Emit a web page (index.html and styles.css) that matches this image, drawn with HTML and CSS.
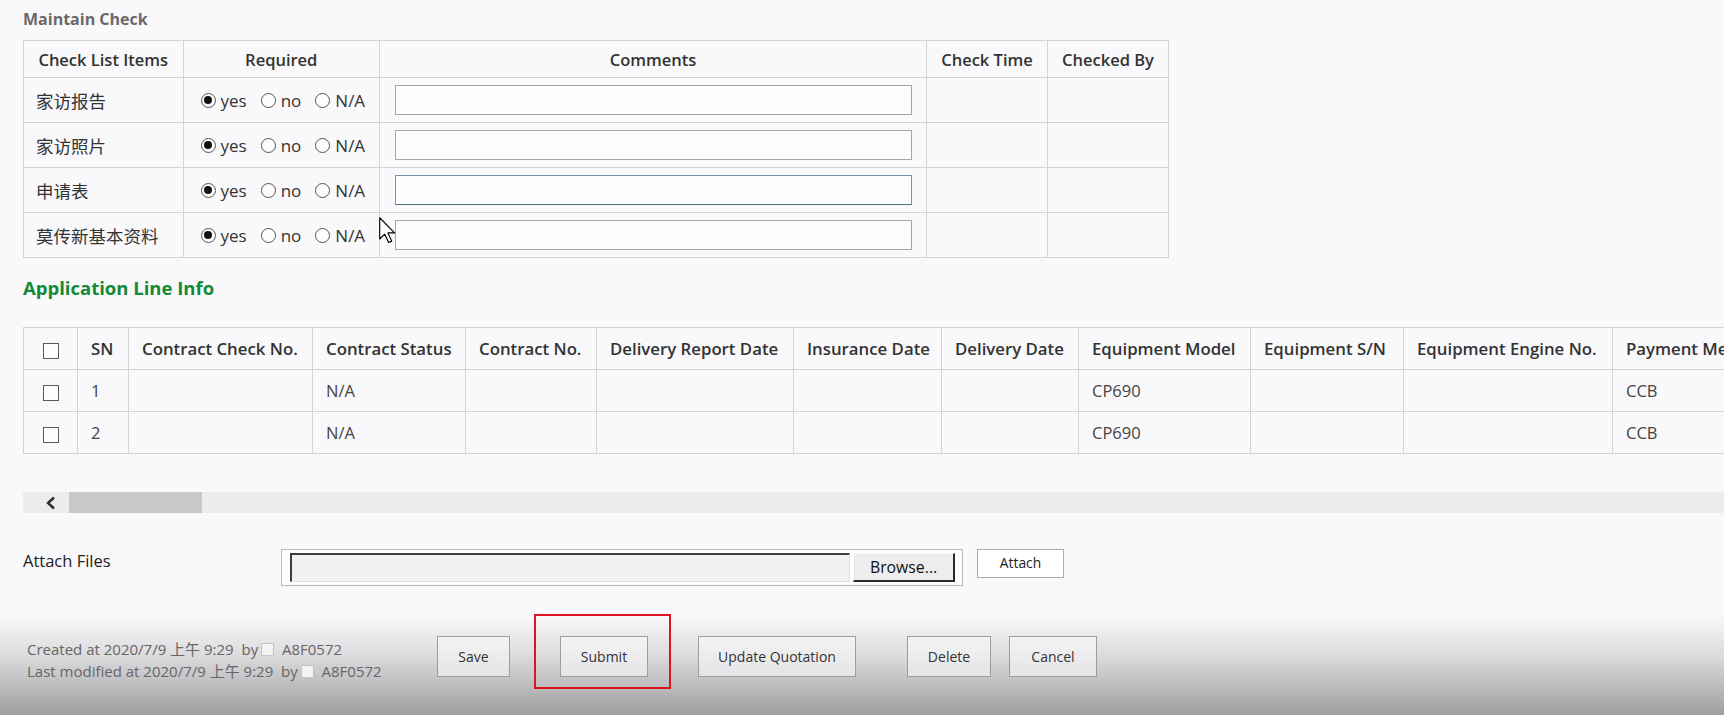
FILE: index.html
```html
<!DOCTYPE html>
<html lang="en">
<head>
<meta charset="utf-8">
<title>Maintain Check</title>
<link rel="stylesheet" href="styles.css">
</head>
<body>
<div class="page">
  <div class="content">
    <h2 class="section-title">Maintain Check</h2>
    <table class="check">
      <colgroup>
        <col class="c-item"><col class="c-req"><col class="c-com"><col class="c-time"><col class="c-by">
      </colgroup>
      <thead>
        <tr><th>Check List Items</th><th>Required</th><th>Comments</th><th>Check Time</th><th>Checked By</th></tr>
      </thead>
      <tbody>
        <tr>
          <td class="item">家访报告</td>
          <td><div class="radios"><span class="radio on"></span><span class="rl">yes</span><span class="radio"></span><span class="rl">no</span><span class="radio"></span><span class="rl">N/A</span></div></td>
          <td class="com"><div class="input"></div></td><td></td><td></td>
        </tr>
        <tr>
          <td class="item">家访照片</td>
          <td><div class="radios"><span class="radio on"></span><span class="rl">yes</span><span class="radio"></span><span class="rl">no</span><span class="radio"></span><span class="rl">N/A</span></div></td>
          <td class="com"><div class="input"></div></td><td></td><td></td>
        </tr>
        <tr>
          <td class="item">申请表</td>
          <td><div class="radios"><span class="radio on"></span><span class="rl">yes</span><span class="radio"></span><span class="rl">no</span><span class="radio"></span><span class="rl">N/A</span></div></td>
          <td class="com"><div class="input focus"></div></td><td></td><td></td>
        </tr>
        <tr>
          <td class="item">莫传新基本资料</td>
          <td><div class="radios"><span class="radio on"></span><span class="rl">yes</span><span class="radio"></span><span class="rl">no</span><span class="radio"></span><span class="rl">N/A</span></div></td>
          <td class="com"><div class="input"></div></td><td></td><td></td>
        </tr>
      </tbody>
    </table>

    <h2 class="green-title">Application Line Info</h2>
  </div>

  <div class="lines-wrap">
    <table class="lines">
      <colgroup>
        <col class="l-cb"><col class="l-sn"><col class="l-ccn"><col class="l-cs"><col class="l-cn"><col class="l-drd"><col class="l-id"><col class="l-dd"><col class="l-em"><col class="l-es"><col class="l-ee"><col class="l-pm">
      </colgroup>
      <thead>
        <tr>
          <th class="cb"><span class="box"></span></th><th>SN</th><th>Contract Check No.</th><th>Contract Status</th><th>Contract No.</th><th>Delivery Report Date</th><th>Insurance Date</th><th>Delivery Date</th><th>Equipment Model</th><th>Equipment S/N</th><th>Equipment Engine No.</th><th>Payment Method</th>
        </tr>
      </thead>
      <tbody>
        <tr>
          <td class="cb"><span class="box"></span></td><td>1</td><td></td><td>N/A</td><td></td><td></td><td></td><td></td><td>CP690</td><td></td><td></td><td>CCB</td>
        </tr>
        <tr>
          <td class="cb"><span class="box"></span></td><td>2</td><td></td><td>N/A</td><td></td><td></td><td></td><td></td><td>CP690</td><td></td><td></td><td>CCB</td>
        </tr>
      </tbody>
    </table>
  </div>

  <div class="hscroll">
    <svg class="arrow" width="12" height="14" viewBox="0 0 12 14"><polyline points="9,1.5 3,7 9,12.5" fill="none" stroke="#2a2a2a" stroke-width="2.4"/></svg>
    <span class="thumb"></span>
  </div>

  <div class="attach-row">
    <span class="attach-label">Attach Files</span>
    <div class="file-box">
      <div class="file-field"></div>
      <div class="browse">Browse...</div>
    </div>
    <div class="attach-btn">Attach</div>
  </div>

  <div class="footer">
    <div class="meta">
      <div>Created at 2020/7/9 上午 9:29&nbsp; by<span class="ph"></span>&nbsp; A8F0572</div>
      <div>Last modified at 2020/7/9 上午 9:29&nbsp; by<span class="ph"></span>&nbsp; A8F0572</div>
    </div>
    <div class="actions">
      <button class="btn save">Save</button>
      <button class="btn submit">Submit</button>
      <button class="btn update">Update Quotation</button>
      <button class="btn delete">Delete</button>
      <button class="btn cancel">Cancel</button>
    </div>
    <div class="highlight"></div>
  </div>

  <svg class="cursor" width="17" height="27" viewBox="0 0 12 19">
    <path d="M0.5 0.5 L0.5 15.5 L4 12 L6.8 18 L9 17 L6.3 11.2 L11 11.2 Z" fill="#fff" stroke="#000" stroke-width="0.8" stroke-linejoin="round"/>
  </svg>
</div>
</body>
</html>
```

FILE: styles.css
```css
* { box-sizing: border-box; }
html, body { margin: 0; padding: 0; }
body {
  background: #f9f8fa;
  font-family: "Open Sans", "Noto Sans CJK SC", sans-serif;
  color: #333;
  width: 1724px;
  height: 715px;
  overflow: hidden;
}
.page { position: relative; height: 715px; }
.content { padding-left: 23px; padding-top: 8px; }

.section-title {
  margin: 0 0 10px 0;
  font-size: 16px;
  font-weight: 700;
  color: #6a6a6a;
  line-height: 22px;
}

/* check table */
.check {
  border-collapse: collapse;
  table-layout: fixed;
  width: 1145px;
  font-size: 16.5px;
}
.check .c-item { width: 159.5px; }
.check .c-req { width: 196.5px; }
.check .c-com { width: 547px; }
.check .c-time { width: 121px; }
.check .c-by { width: 121px; }
.check th, .check td {
  border: 1px solid #d3d3d5;
  padding: 0;
}
.check th {
  height: 37px;
  font-weight: 600;
  text-align: center;
  color: #333;
  white-space: nowrap;
}
.check td { height: 45px; }
.check td.item {
  padding-left: 12px;
  font-family: "Noto Sans CJK SC", sans-serif;
  font-size: 17.5px;
  color: #333;
  white-space: nowrap;
}
.radios {
  display: flex;
  align-items: center;
  padding-left: 17px;
  font-size: 17px;
  color: #333;
}
.radio {
  width: 15px;
  height: 15px;
  border: 1px solid #555;
  border-radius: 50%;
  display: inline-flex;
  align-items: center;
  justify-content: center;
  margin-right: 5px;
  background: #fdfdfd;
  flex: none;
}
.radio.on::after {
  content: "";
  width: 8px;
  height: 8px;
  border-radius: 50%;
  background: #111;
}
.rl { margin-right: 14px; }
.check td.com { padding: 0 14px 0 15px; }
.input {
  height: 30px;
  border: 1px solid #a6a6a8;
  background: #fcfbfd;
}
.input.focus {
  border-color: #6e9aa8;
  border-bottom-color: #4f6f7a;
}

.green-title {
  margin: 18px 0 0 0;
  font-size: 18.5px;
  font-weight: 700;
  color: #138a36;
  line-height: 24px;
}

/* lines table */
.lines-wrap {
  margin: 27px 0 0 23px;
  overflow: hidden;
  width: 1701px;
}
.lines {
  border-collapse: collapse;
  table-layout: fixed;
  width: 1800px;
  font-size: 16.8px;
}
.l-cb { width: 54px; }
.l-sn { width: 51px; }
.l-ccn { width: 184px; }
.l-cs { width: 153px; }
.l-cn { width: 131px; }
.l-drd { width: 197px; }
.l-id { width: 148px; }
.l-dd { width: 137px; }
.l-em { width: 172px; }
.l-es { width: 153px; }
.l-ee { width: 209px; }
.l-pm { width: 211px; }
.lines th, .lines td {
  border: 1px solid #d3d3d5;
  padding: 0 0 0 13px;
  text-align: left;
  white-space: nowrap;
  overflow: hidden;
}
.lines th {
  height: 42px;
  font-weight: 600;
  color: #333;
}
.lines td {
  height: 42px;
  color: #444;
  font-size: 16.5px;
}
.lines .cb { padding: 0; text-align: center; }
.box {
  display: inline-block;
  width: 16px;
  height: 16px;
  border: 1.5px solid #5a5a5a;
  background: #fdfdfd;
  vertical-align: middle;
}

/* horizontal scrollbar */
.hscroll {
  margin: 38px 0 0 23px;
  height: 21px;
  background: #ececee;
  display: flex;
  align-items: center;
}
.hscroll .arrow {
  margin-left: 22px;
  margin-right: 12px;
}
.hscroll .thumb {
  width: 133px;
  height: 21px;
  background: #c8c8ca;
}

/* attach row */
.attach-row {
  display: flex;
  align-items: flex-start;
  margin-top: 36px;
  padding-left: 23px;
}
.attach-label {
  width: 258px;
  font-size: 16.5px;
  color: #222;
  line-height: 24px;
}
.file-box {
  width: 682px;
  height: 37px;
  border: 1px solid #b9b9bb;
  background: #fefefe;
  display: flex;
  align-items: center;
  padding: 0 7px 0 8px;
}
.file-field {
  width: 561px;
  height: 29px;
  background: #f1f1f2;
  border-top: 2px solid #3c3c3c;
  border-left: 2px solid #3c3c3c;
  border-right: 1px solid #e0e0e0;
  border-bottom: 1px solid #e0e0e0;
}
.browse {
  width: 102px;
  height: 29px;
  margin-left: 3px;
  background: #ededee;
  border-top: 1px solid #f8f8f8;
  border-left: 1px solid #f8f8f8;
  border-right: 2px solid #2a2a2a;
  border-bottom: 2px solid #2a2a2a;
  font-size: 15.8px;
  color: #111;
  text-align: center;
  line-height: 26px;
}
.attach-btn {
  margin-left: 14px;
  width: 87px;
  height: 29px;
  border: 1px solid #acacae;
  background: #fff;
  font-size: 13.8px;
  color: #222;
  text-align: center;
  line-height: 26px;
}

/* footer */
.footer {
  position: absolute;
  left: 0;
  right: 0;
  bottom: 0;
  height: 100px;
  background: linear-gradient(to bottom, #f9f8fa 0%, #dcdbdd 40%, #9e9d9f 100%);
  display: flex;
  align-items: flex-start;
  padding: 21px 0 0 27px;
}
.meta {
  width: 410px;
  font-size: 15px;
  color: #666;
  line-height: 22px;
  padding-top: 2px;
  white-space: nowrap;
}
.ph {
  display: inline-block;
  width: 13px;
  height: 13px;
  border: 1px solid #c4c4c6;
  background: #f3f3f4;
  margin-left: 3px;
  vertical-align: -1px;
}
.actions { display: flex; }
.btn {
  height: 41px;
  border: 1px solid #9d9d9f;
  background: linear-gradient(to bottom, #f4f4f5, #e4e4e6);
  font-family: "Open Sans", sans-serif;
  font-size: 14px;
  color: #333;
  padding: 0;
}
.btn.save { width: 73px; }
.btn.submit { width: 88px; margin-left: 50px; }
.btn.update { width: 158px; margin-left: 50px; }
.btn.delete { width: 84px; margin-left: 51px; }
.btn.cancel { width: 88px; margin-left: 18px; }
.highlight {
  position: absolute;
  left: 534px;
  top: -1px;
  width: 137px;
  height: 75px;
  border: 2px solid #e0141e;
}

.cursor {
  position: absolute;
  left: 379px;
  top: 217px;
}
```
